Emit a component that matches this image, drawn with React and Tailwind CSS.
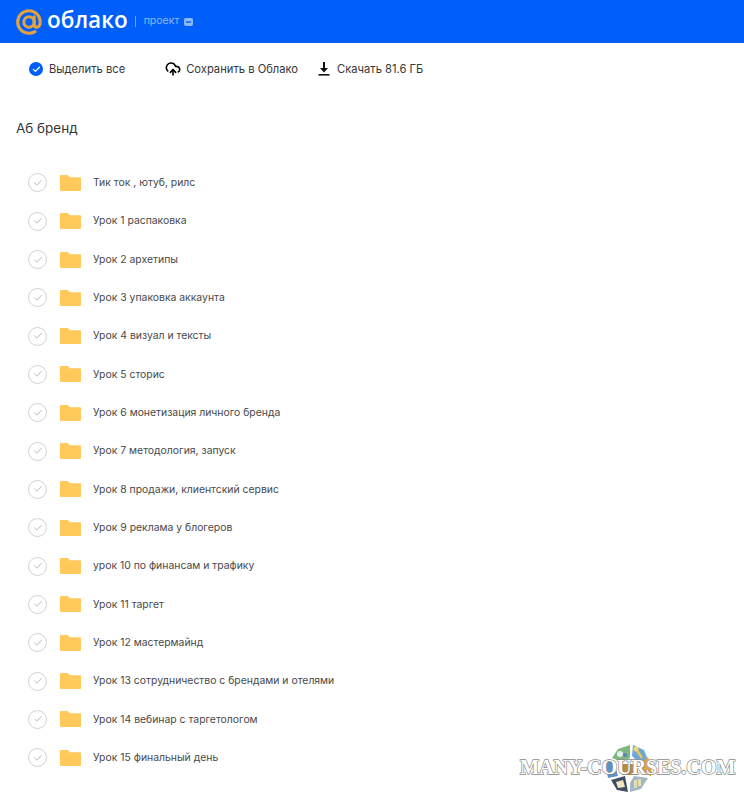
import React from 'react';
import { Check, CloudUpload } from 'lucide-react';

const folders = [
    'Тик ток , ютуб, рилс',
    'Урок 1 распаковка',
    'Урок 2 архетипы',
    'Урок 3 упаковка аккаунта',
    'Урок 4 визуал и тексты',
    'Урок 5 сторис',
    'Урок 6 монетизация личного бренда',
    'Урок 7 методология, запуск',
    'Урок 8 продажи, клиентский сервис',
    'Урок 9 реклама у блогеров',
    'урок 10 по финансам и трафику',
    'Урок 11 таргет',
    'Урок 12 мастермайнд',
    'Урок 13 сотрудничество с брендами и отелями',
    'Урок 14 вебинар с таргетологом',
    'Урок 15 финальный день',
];

const FolderIcon = () => (
    <svg width="21" height="16" viewBox="0 0 21 16" className="shrink-0">
        <path d="M0 .8C0 .4.4 0 .8 0h6.400c.4 0 .7.100 1 .4L10 2.200h10.200c.4 0 .8.400.8.800v12.200c0 .4-.4.800-.8.800H.8c-.4 0-.8-.4-.8-.8z" fill="#ffc95c" />
    </svg>
);

const MailAt = () => (
    <svg width="26" height="26" viewBox="0 0 26 26" fill="none" className="shrink-0">
        <circle cx="13" cy="13" r="5.200" stroke="#e3a23f" strokeWidth="3.100" />
        <path d="M18.200 7.800v7.400c0 2 1.100 3 2.500 3 1.900 0 3.500-1.900 3.500-5.200C24.200 6.700 19.200 1.700 13 1.700 6.700 1.700 1.700 6.700 1.700 13S6.700 24.300 13 24.300c2.300 0 4.300-.6 6-1.700" stroke="#e3a23f" strokeWidth="3.100" strokeLinecap="round" />
    </svg>
);

const DownloadIcon = () => (
    <svg width="12" height="14" viewBox="0 0 12 14" className="shrink-0">
        <path d="M5 0h2v6h3L6 10.500 2 6h3z" fill="#111" />
        <rect x="0.500" y="12" width="11" height="1.600" fill="#111" />
    </svg>
);

const Watermark = () => (
    <div className="absolute left-[520px] top-[743px] w-[224px] h-[50px]">
        <svg width="50" height="50" viewBox="0 0 50 50" className="absolute left-[83px] top-0">
            {/* top left, green */}
            <path d="M9 15 L15 6 L27 2 L27 15 L19 19 Z" fill="#7fb77e" />
            <circle cx="17" cy="11" r="3" fill="#e4eef2" />
            <circle cx="22" cy="12" r="2" fill="#4f87b5" />
            {/* top right, blue */}
            <path d="M30 2 L41 7 L45 17 L36 20 L29 13 Z" fill="#6fa8d6" />
            <path d="M33 6 L39 15" stroke="#e8c45a" strokeWidth="2.500" />
            <circle cx="33" cy="6" r="2.500" fill="#f0d878" />
            {/* right, orange */}
            <path d="M37 21 L45 14 L49 24 L48 33 L38 30 Z" fill="#e8a33d" />
            {/* bottom right, grey blue */}
            <path d="M31 33 L45 35 L38 46 L27 49 L27 40 Z" fill="#9db8c9" />
            <path d="M31 37h3v8h-3zM35 36h3v7h-3z" fill="#e8ddb0" />
            {/* bottom left, dark */}
            <path d="M8 37 L22 33 L25 49 L14 47 Z" fill="#3f4d63" />
            <path d="M13 39 L20 37 L22 44 L15 45 Z" fill="#f1e6c0" />
            {/* left, blue */}
            <path d="M2 19 L11 19 L15 33 L5 35 Z" fill="#5d93c4" />
            {/* centre */}
            <path d="M17 21 L34 21 L35 32 L19 32 Z" fill="#b98a3e" />
        </svg>
        <div className="absolute left-0 top-[13px] font-['Liberation_Serif',serif] font-bold text-[20.300px] leading-[22px] tracking-[-0.2px] whitespace-nowrap text-white [-webkit-text-stroke:1.400px_#8c8c8c] [paint-order:stroke_fill]">
            MANY-COURSES.COM
        </div>
    </div>
);

export default function App() {
    return (
        <div className="relative w-[744px] h-[800px] bg-white overflow-hidden font-['Inter',sans-serif]">
            {/* Header */}
            <header className="h-[43px] bg-[#005ff9] flex items-center pl-[16px]">
                <MailAt />
                <span className="ml-[5px] text-white text-[22.500px] font-semibold leading-none font-['Open_Sans',sans-serif] pb-[3px]">облако</span>
                <span className="ml-[7px] w-px h-[11px] bg-[#6fa3f5]" />
                <span className="ml-[8px] text-[#8db8fb] text-[10.500px] leading-none">проект</span>
                <span className="ml-[5px] w-[9px] h-[8px] rounded-[2px] bg-[#8db8fb] flex items-center justify-center">
                    <span className="w-[5px] h-[2px] bg-[#2f7bf6]" />
                </span>
            </header>

            {/* Toolbar */}
            <div className="h-[52px] flex items-center pl-[29px] text-[11.200px] text-[#36373a]">
                <span className="w-[14px] h-[14px] rounded-full bg-[#005ff9] flex items-center justify-center">
                    <Check size={9} color="white" strokeWidth={3.5} />
                </span>
                <span className="ml-[6px]">Выделить все</span>
                <CloudUpload size={16} strokeWidth={2.400} className="ml-[40px] text-black" />
                <span className="ml-[5px]">Сохранить в Облако</span>
                <span className="ml-[20px]"><DownloadIcon /></span>
                <span className="ml-[7px]">Скачать 81.6 ГБ</span>
            </div>

            {/* Title */}
            <h1 className="mt-[24px] pl-[16px] text-[13.500px] leading-[19px] text-[#36373a] font-normal">Аб бренд</h1>

            {/* Folder list */}
            <ul className="mt-[25.700px]">
                {folders.map(name => (
                    <li key={name} className="h-[38.330px] flex items-center pl-[28px]">
                        <span className="w-[19px] h-[19px] rounded-full border border-[#d3d3d3] flex items-center justify-center shrink-0">
                            <Check size={10} color="#a8a8a8" strokeWidth={2} />
                        </span>
                        <span className="ml-[13px]"><FolderIcon /></span>
                        <span className="ml-[12px] text-[10.400px] text-[#47484a] whitespace-nowrap">{name}</span>
                    </li>
                ))}
            </ul>

            <Watermark />
        </div>
    );
}
